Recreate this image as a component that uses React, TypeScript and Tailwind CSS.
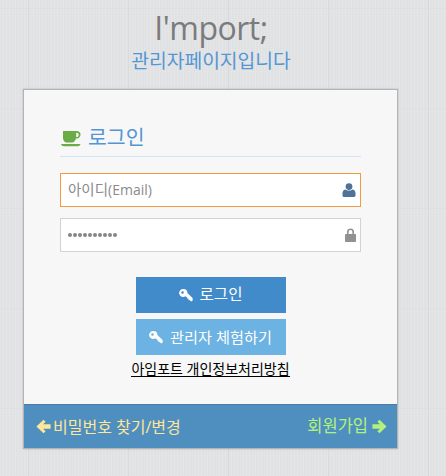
import React from 'react';

const font = "font-['Open_Sans','Noto_Sans_CJK_KR',sans-serif]";

const KeyIcon = () => (
  <svg viewBox="0 0 14 14" className="h-[14px] w-[14px] shrink-0" fill="currentColor">
    <path fillRule="evenodd" d="M4.5 1a4 4 0 0 1 3.9 4.1L13.6 10l.1 2.4-1.6 1-1.5-1.5-.9.3-.3-1.4-1.2-.2-.1-1.2-1.6-1.2A4 4 0 1 1 4.5 1ZM3.5 3.2a1.3 1.3 0 1 0 0 2.6 1.3 1.3 0 0 0 0-2.6Z" />
  </svg>
);

const ArrowLeft = () => (
  <svg viewBox="0 0 14 14" className="h-[15px] w-[15px] shrink-0" fill="currentColor">
    <path d="M7 .6 9 2.6 6.6 5H13.6V9H6.6L9 11.4 7 13.4.4 7Z" />
  </svg>
);

const ArrowRight = () => (
  <svg viewBox="0 0 14 14" className="h-[15px] w-[15px] shrink-0" fill="currentColor">
    <path d="M7 .6 5 2.6 7.4 5H.4V9H7.4L5 11.4 7 13.4 13.6 7Z" />
  </svg>
);

export default function App() {
  return (
    <div className={`${font} h-[476px] w-[446px] overflow-hidden bg-[#e2e3e5] bg-[linear-gradient(90deg,#d9dadc_1px,transparent_1px),linear-gradient(#dedfe1_1px,transparent_1px),repeating-linear-gradient(90deg,rgba(255,255,255,0.12)_0_1px,transparent_1px_3px),repeating-linear-gradient(rgba(0,0,0,0.012)_0_1px,transparent_1px_2px)] bg-[size:100px_100px,100px_100px,auto,auto] bg-[position:28px_8px,28px_8px,0_0,0_0]`}>
      <div className="flex w-[422px] flex-col items-center pt-[10px]">
        <h1 className="text-[32px] leading-[36px] tracking-[-0.5px] text-[#7b7b7b]">I'mport;</h1>
        <p className="mt-[3px] text-[19.3px] leading-[24px] text-[#5496d3]">관리자페이지입니다</p>
      </div>

      <div className="ml-[23px] mt-[16px] w-[375px] border border-[#b4b4b4] shadow-[0_0_2px_rgba(0,0,0,0.2)]">
        <div className="h-[314px] bg-[#f7f7f7] px-[36px] pt-[34px]">
          <div className="flex h-[33px] items-start gap-[7px] border-b border-[#d3e5f5] pl-[1px]">
            <svg viewBox="0 0 20 16" className="mt-[7px] h-[16px] w-[20px] shrink-0" fill="#6aac46">
              <path fillRule="evenodd" d="M2 0H15.5C18 0 19.5 1.4 19.5 3.6S18 7.6 15.5 7.6H15C14.4 10 13 11.5 11 11.5H6C3.6 11.5 2 9.5 2 7ZM15.2 1.8V6H15.6C17 6 17.7 5 17.7 3.9S17 1.8 15.6 1.8Z" />
              <path d="M0 13H19.5C19 14.6 18 15.2 16.5 15.2H3C1.5 15.2.5 14.6 0 13Z" />
            </svg>
            <span className="text-[20.5px] leading-[26px] text-[#5496d3]">로그인</span>
          </div>

          <div className="mt-[16px] flex h-[34px] items-center justify-between border border-[#f29a3e] bg-white pl-[7px] pr-[4px]">
            <span className="text-[14px] text-[#8a8a8a]">
              <span className="text-[14.5px]">아이디</span>(Email)
            </span>
            <svg viewBox="0 0 14 14" className="h-[14px] w-[14px]" fill="#4f7299">
              <circle cx="7" cy="3.6" r="3.4" />
              <path d="M.5 10C.5 7.8 2 6.6 3.6 6.4 4.6 7.2 5.7 7.6 7 7.6S9.4 7.2 10.4 6.4C12 6.6 13.5 7.8 13.5 10V12.2C13.5 13.2 12.8 14 11.8 14H2.2C1.2 14 .5 13.2 .5 12.2Z" />
            </svg>
          </div>

          <div className="mt-[11px] flex h-[34px] items-center justify-between border border-[#d2d2d2] bg-white pl-[7px] pr-[4px]">
            <span className="flex gap-[1.2px]">
              {Array.from({ length: 10 }).map((_, i) => (
                <span key={i} className="h-[3.8px] w-[3.8px] rounded-full bg-[#858585]" />
              ))}
            </span>
            <svg viewBox="0 0 11 14" className="h-[14px] w-[11px]" fill="#919191">
              <path fillRule="evenodd" d="M2 6V4A3.5 3.5 0 0 1 9 4V6H10.2C10.7 6 11 6.3 11 6.8V13.2C11 13.7 10.7 14 10.2 14H.8C.3 14 0 13.7 0 13.2V6.8C0 6.3.3 6 .8 6ZM3.6 6H7.4V4A1.9 1.9 0 0 0 3.6 4Z" />
            </svg>
          </div>

          <div className="mt-[25px] flex flex-col items-center">
            <button className="flex h-[36px] w-[150px] items-center justify-center gap-[7px] bg-[#428bca] text-[15.5px] text-white">
              <KeyIcon />
              로그인
            </button>
            <button className="mt-[6px] flex h-[36px] w-[150px] items-center justify-center gap-[7px] bg-[#6cb2e2] text-[15.2px] text-white">
              <KeyIcon />
              관리자 체험하기
            </button>
            <a className="mt-[6px] border-b border-black text-[14px] leading-[15px] text-black">아임포트 개인정보처리방침</a>
          </div>
        </div>

        <div className="flex h-[44px] items-center justify-between border-t border-[#4a7aa5] bg-[#4f8fc0] pl-[12px] pr-[10px]">
          <span className="flex items-center gap-[2px] text-[16px] text-[#ffe699]">
            <ArrowLeft />
            비밀번호 찾기/변경
          </span>
          <span className="flex items-center gap-[4px] text-[16.5px] text-[#b3f27a]">
            회원가입
            <ArrowRight />
          </span>
        </div>
      </div>
    </div>
  );
}
